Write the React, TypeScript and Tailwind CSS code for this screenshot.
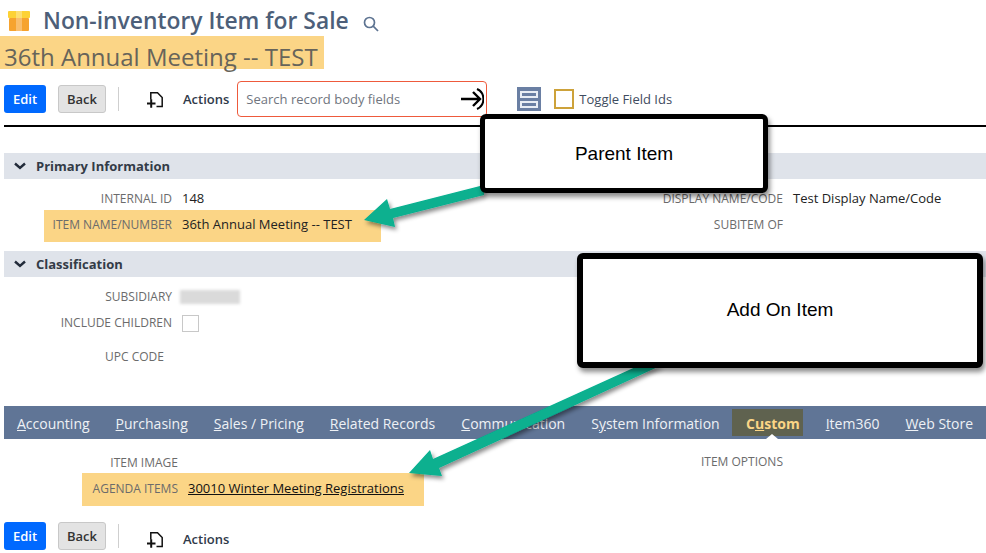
import React from "react";

function DocPlus() {
  return (
    <svg width="18" height="20" viewBox="0 0 18 20" fill="none" stroke="#111" strokeWidth="1.5">
      <path d="M3.8 8.5V1.8H10.5L15.2 6.5V15.5H9.5" />
      <path d="M0 12.5h8.5M4.2 8.2v8.6" strokeWidth="2" />
    </svg>
  );
}

function Chevron() {
  return (
    <svg width="12" height="8" viewBox="0 0 12 8" fill="none" stroke="#222b3a" strokeWidth="2.4">
      <path d="M1 1.5l5 4.5 5-4.5" />
    </svg>
  );
}

function Toolbar({ children, low }: { children?: React.ReactNode; low?: boolean }) {
  return (
    <div className="flex items-center h-[28px] pl-[4px]">
      <button className="w-[42px] h-[28px] pt-[2px] rounded-[3px] bg-[#0069ff] text-white text-[13px] font-semibold">Edit</button>
      <button className="ml-[12px] w-[48px] h-[28px] pt-[2px] rounded-[3px] bg-[#e3e3e3] border border-[#c8c8c8] text-[#333] text-[13px] font-semibold">Back</button>
      <div className="ml-[12px] w-px h-[24px] bg-[#cfcfcf]" />
      <div className={low ? "ml-[28px] w-[18px] h-[20px] pt-[5px]" : "ml-[28px] w-[18px] h-[20px] pt-[2px]"}><DocPlus /></div>
      <span className={low ? "ml-[18px] text-[13px] font-semibold text-[#2f3a4a] pt-[8px]" : "ml-[18px] text-[13px] font-semibold text-[#2f3a4a] pt-[2px]"}>Actions</span>
      {children}
    </div>
  );
}

function Section({ title }: { title: string }) {
  return (
    <div className="ml-[4px] h-[26px] bg-[#dfe3ea] flex items-center pl-[10px]">
      <Chevron />
      <span className="ml-[10px] pt-[2px] text-[13px] font-bold text-[#333b47]">{title}</span>
    </div>
  );
}

function Field({ label, value, w = 172 }: { label: string; value?: React.ReactNode; w?: number }) {
  return (
    <div className="flex items-center h-[18px]">
      <span className="text-[12px] text-right text-[#6b6b6b] shrink-0" style={{ width: w }}>{label}</span>
      {value != null && <span className="ml-[10px] text-[13px] text-[#222]">{value}</span>}
    </div>
  );
}

function Tab({ first, rest }: { first: string; rest: string }) {
  return <span className="pt-[2px]"><u>{first}</u>{rest}</span>;
}

export default function App() {
  return (
    <div className="relative w-[986px] h-[553px] overflow-hidden bg-white font-['Open_Sans',sans-serif]">
      {/* Header */}
      <div className="flex items-center h-[36px] pl-[8px] pt-[6px]">
        <svg width="22" height="20" viewBox="0 0 22 20">
          <rect x="0" y="0" width="22" height="7" rx="1" fill="#fdd235" />
          <rect x="1" y="7" width="20" height="13" rx="1" fill="#f6a32f" />
          <rect x="8" y="0" width="6" height="20" fill="#fff" opacity="0.3" />
        </svg>
        <span className="ml-[13px] text-[22.85px] font-semibold text-[#4d5f79] leading-none">Non-inventory Item for Sale</span>
        <svg className="ml-[14px] mt-[5px]" width="16" height="16" viewBox="0 0 16 16" fill="none" stroke="#5d7391" strokeWidth="1.7">
          <circle cx="6.5" cy="6.5" r="5" />
          <path d="M10.2 10.2L15 15" />
        </svg>
      </div>
      <div className="w-[324px] h-[33px] bg-[#fbd586] text-[24px] leading-[42px] text-[#67645a] whitespace-nowrap pl-[4px]">
        36th Annual Meeting -- TEST
      </div>

      {/* Toolbar */}
      <div className="h-[36px] mt-[12px] flex items-center">
        <Toolbar>
          <div className="ml-[8px] w-[250px] h-[36px] shrink-0 rounded-[4px] border border-[#ee5a3c] flex items-center pl-[8px] pr-[2px] justify-between">
            <span className="text-[13px] pt-[2px] text-[#70757e]">Search record body fields</span>
            <svg width="24" height="24" viewBox="0 0 24 24" fill="none" stroke="#000" strokeWidth="2.4">
              <path d="M1 12h19M13 5l7 7-7 7" />
              <path d="M17 2a11 11 0 0 1 0 20" strokeWidth="2" />
            </svg>
          </div>
          <div className="ml-[30px] w-[24px] h-[24px] bg-[#6a7fa3] flex flex-col justify-center gap-[3px] px-[3px] shrink-0">
            <div className="h-[7px] border-2 border-[#e8edf4]" />
            <div className="h-[7px] border-2 border-[#e8edf4]" />
          </div>
          <div className="ml-[13px] w-[20px] h-[20px] border-2 border-[#cda23a] shrink-0" />
          <span className="ml-[5px] pt-[2px] text-[13px] text-[#3f4c60] whitespace-nowrap">Toggle Field Ids</span>
        </Toolbar>
      </div>
      <div className="ml-[4px] mt-[8px] h-[2px] bg-black" />

      {/* Primary info */}
      <div className="mt-[26px]"><Section title="Primary Information" /></div>
      <div className="relative h-[72px]">
        <div className="absolute left-[44px] top-[31px] w-[337px] h-[32px] bg-[#fbd586]" />
        <div className="relative pt-[11px] flex flex-col gap-[8px]">
          <Field label="INTERNAL ID" value="148" />
          <Field label="ITEM NAME/NUMBER" value="36th Annual Meeting -- TEST" />
        </div>
        <div className="absolute left-[600px] top-[11px] flex flex-col gap-[8px]">
          <Field w={183} label="DISPLAY NAME/CODE" value="Test Display Name/Code" />
          <Field w={183} label="SUBITEM OF" />
        </div>
      </div>

      <Section title="Classification" />
      <div className="h-[129px] pt-[11px]">
        <div className="flex items-center h-[18px]">
          <span className="w-[172px] text-[12px] text-right text-[#6b6b6b]">SUBSIDIARY</span>
          <div className="ml-[8px] w-[60px] h-[14px] bg-[#dadada] blur-[1.5px]" />
        </div>
        <div className="flex items-center h-[18px] mt-[8px]">
          <span className="w-[172px] text-[12px] text-right text-[#6b6b6b]">INCLUDE CHILDREN</span>
          <div className="ml-[10px] w-[17px] h-[17px] border border-[#c8c8c8]" />
        </div>
        <div className="flex items-center h-[18px] mt-[16px]">
          <span className="w-[164px] text-[12px] text-right text-[#6b6b6b]">UPC CODE</span>
        </div>
      </div>

      {/* Tabs */}
      <div className="relative ml-[4px] h-[33px] bg-[#607596] flex items-center pl-[13px] text-[14px] text-[#eef1f5] whitespace-nowrap">
        <span className="mr-[26px] flex"><Tab first="A" rest="ccounting" /></span>
        <span className="mr-[26px] flex"><Tab first="P" rest="urchasing" /></span>
        <span className="mr-[26px] flex"><Tab first="S" rest="ales / Pricing" /></span>
        <span className="mr-[26px] flex"><Tab first="R" rest="elated Records" /></span>
        <span className="mr-[26px] flex"><Tab first="C" rest="ommunication" /></span>
        <span className="mr-[12px] pt-[2px]">S<u>y</u>stem Information</span>
        <span className="h-[27px] -mt-[1px] pt-[2px] w-[71px] bg-[#5f624f] flex items-center justify-end pr-[3px] font-bold text-[#fbd586] mr-[23px]"><span>C<u>u</u>stom</span></span>
        <span className="mr-[26px] flex"><Tab first="I" rest="tem360" /></span>
        <span className="flex"><Tab first="W" rest="eb Store" /></span>
        <div className="absolute left-[762px] bottom-0 w-0 h-0 border-x-[6px] border-x-transparent border-b-[5px] border-b-white" />
      </div>

      {/* Custom tab body */}
      <div className="relative h-[83px]">
        <div className="absolute left-[82px] top-[34px] w-[342px] h-[33px] bg-[#fbd586]" />
        <div className="relative pt-[15px]">
          <div className="flex items-center h-[18px]">
            <span className="w-[178px] text-[12px] text-right text-[#6b6b6b]">ITEM IMAGE</span>
          </div>
          <div className="flex items-center h-[18px] mt-[8px]">
            <span className="w-[178px] text-[12px] text-right text-[#6b6b6b]">AGENDA ITEMS</span>
            <a className="ml-[10px] text-[13px] text-[#111] underline">30010 Winter Meeting Registrations</a>
          </div>
        </div>
        <div className="absolute left-[600px] top-[14px] h-[18px] flex items-center">
          <span className="w-[183px] text-[12px] text-right text-[#6b6b6b]">ITEM OPTIONS</span>
        </div>
      </div>

      <Toolbar low />

      {/* Annotation arrows */}
      <svg className="absolute left-0 top-0 pointer-events-none" width="986" height="553" viewBox="0 0 986 553">
        <defs>
          <filter id="sh" x="-20%" y="-20%" width="140%" height="140%">
            <feDropShadow dx="2" dy="3" stdDeviation="2" floodColor="#000" floodOpacity="0.45" />
          </filter>
        </defs>
        <polygon filter="url(#sh)" fill="#07b08f" points="364,220 387,199 390,209 484,185 484,195 393,218 395,227" />
        <polygon filter="url(#sh)" fill="#07b08f" points="409,473 430,450 433,459 640,365 662,365 439,468 442,476" />
      </svg>

      {/* Callouts */}
      <div className="absolute left-[480px] top-[114px] w-[288px] h-[79px] pt-[1px] bg-white border-[5px] border-black rounded-[6px] shadow-[2px_4px_5px_rgba(0,0,0,0.45)] flex items-center justify-center font-['Liberation_Sans',sans-serif] text-[19px] text-black">
        Parent Item
      </div>
      <div className="absolute left-[577px] top-[253px] w-[406px] h-[115px] bg-white border-[6px] border-black rounded-[6px] shadow-[2px_4px_5px_rgba(0,0,0,0.45)] flex items-center justify-center font-['Liberation_Sans',sans-serif] text-[19px] text-black">
        <span className="-mt-[1px]">Add On Item</span>
      </div>
    </div>
  );
}
